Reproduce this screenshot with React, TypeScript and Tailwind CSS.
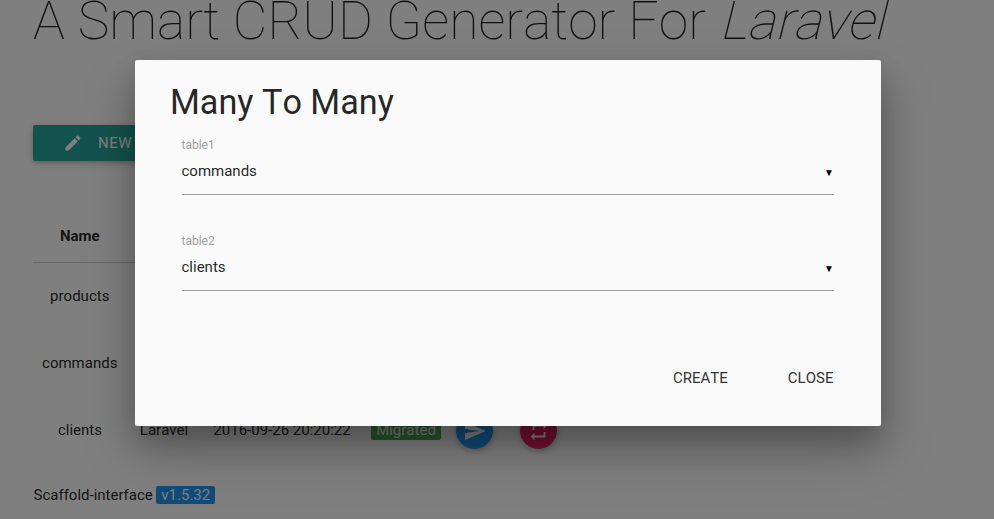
const pageFont = 'font-[Roboto,"Liberation_Sans",sans-serif] [font-kerning:none]';

function SelectField({ label, value }: { label: string; value: string }) {
  return (
    <div className="flex h-24 flex-col">
      <label className="h-[17px] text-[12px] leading-[17px] text-[#9e9e9e]">{label}</label>
      <div className="flex h-[41px] items-start justify-between border-b border-[#9e9e9e] pt-[8px]">
        <span className="text-[15px] leading-[18px]">{value}</span>
        <span className="pt-[4px] text-[10px] leading-[14px] text-black">▼</span>
      </div>
    </div>
  );
}

export default function App() {
  return (
    <div
      className={`relative h-[519px] w-[994px] overflow-hidden bg-white text-[15px] leading-[22px] text-black/87 ${pageFont}`}
    >
      <div className="pl-[33px]">
        <h1 className="-mt-[9px] h-[134px] text-[53.4px] leading-[59px] font-thin whitespace-nowrap">
          A Smart CRUD Generator For <em className="inline-block origin-[0_81%] -skew-x-[14deg] not-italic">Laravel</em>
        </h1>
        <button className="flex h-9 w-[160px] items-center rounded-[2px] bg-[#26a69a] pl-[30px] text-[15px] tracking-[0.5px] whitespace-nowrap text-white shadow-[0_2px_5px_0_rgba(0,0,0,0.16),0_2px_10px_0_rgba(0,0,0,0.12)]">
          <svg className="mr-[15px] size-5 shrink-0" viewBox="0 0 24 24" fill="currentColor">
            <path d="M3 17.25V21h3.75L17.81 9.94l-3.75-3.75L3 17.25zM20.71 7.04a.996.996 0 0 0 0-1.41l-2.34-2.34a.996.996 0 0 0-1.41 0l-1.83 1.83 3.75 3.75 1.83-1.83z" />
          </svg>
          <span>NEW</span>
        </button>

        <div className="mt-[49px] w-[600px]">
          <div className="flex h-[53px] items-center border-b border-[#d0d0d0]">
            <span className="w-[93.5px] text-center font-bold">Name</span>
          </div>
          <div className="flex h-[67px] items-center">
            <span className="w-[93.5px] pb-[2px] text-center">products</span>
          </div>
          <div className="flex h-[67px] items-center">
            <span className="w-[93.5px] pb-[2px] text-center">commands</span>
          </div>
          <div className="flex h-[67px] items-center">
            <span className="w-[94px] pb-[2px] text-center">clients</span>
            <span className="w-[74px] pb-[2px] text-center">Laravel</span>
            <span className="w-[162px] pb-[2px] text-center">2016-09-26 20:20:22</span>
            <span className="ml-[8px] flex h-[18px] w-[70px] items-center justify-center rounded-[2px] bg-[#4caf50] pb-[2px] text-white">
              Migrated
            </span>
            <span className="ml-[15px] flex size-[37px] items-center justify-center rounded-full bg-[#2196f3] text-white shadow-[0_2px_5px_0_rgba(0,0,0,0.16),0_2px_10px_0_rgba(0,0,0,0.12)]">
              <svg className="size-6" viewBox="0 0 24 24" fill="currentColor">
                <path d="M2.01 21L23 12 2.01 3 2 10l15 2-15 2z" />
              </svg>
            </span>
            <span className="ml-[27px] flex size-[37px] items-center justify-center rounded-full bg-[#e91e63] text-white shadow-[0_2px_5px_0_rgba(0,0,0,0.16),0_2px_10px_0_rgba(0,0,0,0.12)]">
              <svg className="size-[22px]" viewBox="0 0 24 24" fill="currentColor">
                <path d="M7 7h10v3l4-4-4-4v3H5v6h2V7zm10 10H7v-3l-4 4 4 4v-3h12v-6h-2v4z" />
              </svg>
            </span>
          </div>
        </div>
        <div className="mt-[20px] flex items-center">
          <span className="w-[123px] pl-[0.5px]">Scaffold-interface</span>
          <span className="flex h-[18px] w-[59px] items-center justify-center rounded-[2px] bg-[#2196f3] pl-[0.5px] text-white">
            v1.5.32
          </span>
        </div>
      </div>

      <div className="absolute inset-0 bg-black/50" />

      <div className="absolute top-[60px] left-[135px] flex h-[366px] w-[746px] flex-col rounded-[2px] bg-[#fafafa] shadow-[0_16px_28px_0_rgba(0,0,0,0.22),0_25px_55px_0_rgba(0,0,0,0.21)]">
        <h4 className="mt-[23px] ml-[35px] h-[54px] text-[34.2px] leading-[38px]">Many To Many</h4>
        <div className="mr-[47px] ml-[46.5px]">
          <SelectField label="table1" value="commands" />
          <SelectField label="table2" value="clients" />
        </div>
        <div className="mt-[31px] mr-[47.6px] flex h-9 items-center justify-end gap-[60px] text-[15px] text-[#343434]">
          <button>CREATE</button>
          <button>CLOSE</button>
        </div>
      </div>
    </div>
  );
}
